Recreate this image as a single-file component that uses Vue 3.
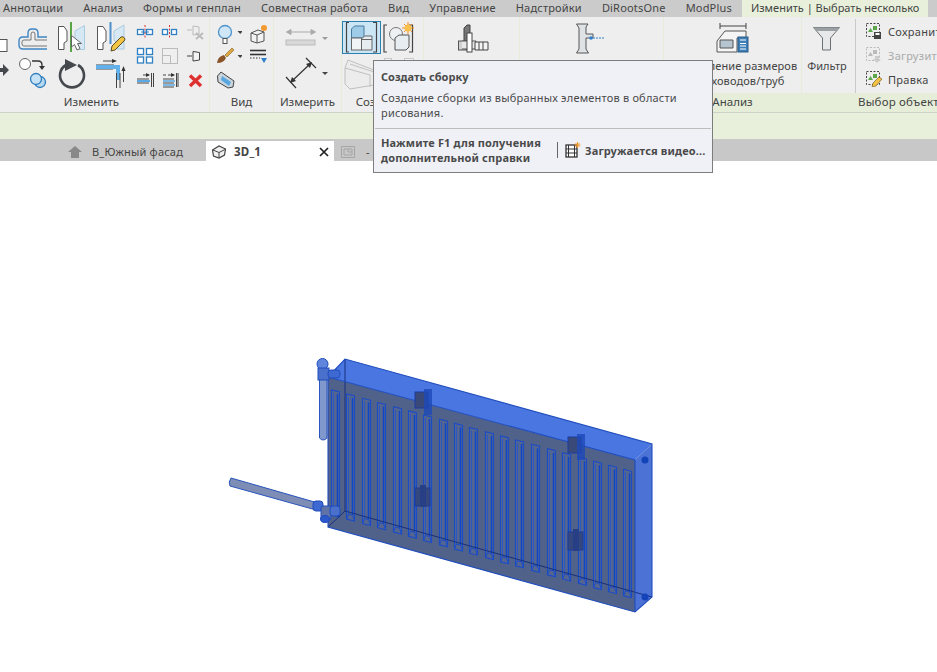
<script setup>
const menus = ['Аннотации', 'Анализ', 'Формы и генплан', 'Совместная работа', 'Вид', 'Управление', 'Надстройки', 'DiRootsOne', 'ModPlus']
const sx = [335, 350, 366, 381, 397, 412, 427, 443, 458, 473, 489, 504, 519, 535, 551, 566, 582, 597, 612, 627]
const slots = sx.map((x) => {
  const top = 377 + (x - 328) * 0.272 + 11
  const bot = 527 + (x - 328) * 0.277 - 14
  const l = x - 3.5, r = x + 4.5
  return {
    outer: `${l},${top} ${r},${top + 2} ${r},${bot + 2} ${l},${bot}`,
    foot: `M${l + 2} ${bot - 5} L${l} ${bot} M${r - 2} ${bot - 4} L${r} ${bot + 2} M${l + 2} ${bot - 5} L${r - 2} ${bot - 4}`,
    rx: r - 2,
    t: top + 4,
    b: bot - 4
  }
})
</script>

<template>
  <div class="app">
    <nav class="menu">
      <span v-for="m in menus" :key="m" class="menu-item">{{ m }}</span>
      <span class="menu-active">Изменить | Выбрать несколько</span>
    </nav>

    <section class="ribbon">
      <div class="group g-modify">
        <div class="body">
          <div class="big">
            <svg width="12" height="36" viewBox="0 19 12 36"><rect x="-3" y="39.500" width="10" height="12" fill="#fff" stroke="#555"/></svg>
            <svg width="40" height="36" viewBox="12 19 40 36">
              <path d="M47 37H38V33Q38 29 34 29H32Q28 29 28 33V37H23Q19 37 19 41V45Q19 49 23 49H47" fill="none" stroke="#3f86c4" stroke-width="1.400"/>
              <path d="M47 40H35V34Q35 32 33 32 31 32 31 34V40H24Q22 40 22 42V44Q22 46 24 46H47" fill="none" stroke="#777"/>
            </svg>
            <svg width="40" height="36" viewBox="52 19 40 36">
              <path d="M58.500 26.500H64L67 31V41L64 43V49.500H58.500Z" fill="#fff" stroke="#555"/>
              <path d="M84.500 25.500V49.500H78V43L75 40V31Z" fill="#d6e8f3" stroke="#a9cbe0"/>
              <path d="M71 22V52" stroke="#58a548" stroke-width="2"/>
              <path d="M71.500 35.500V47L74.500 44.500 77 50 80 48.500 77.500 43.500H81.500Z" fill="#fff" stroke="#666" stroke-width="1"/>
            </svg>
            <svg width="40" height="36" viewBox="92 19 40 36">
              <path d="M97.500 26.500H103L106 31V41L103 43V49.500H97.500Z" fill="#fff" stroke="#555"/>
              <path d="M124 25V49H117V43L114 40V31Z" fill="#d6e8f3" stroke="#a9cbe0"/>
              <path d="M110.500 22V44" stroke="#4b8fcb" stroke-width="2"/>
              <path d="M111 51L112 46 121 37Q123 36 124.500 38 125.500 40 124 41L115 50Z" fill="#f3c544" stroke="#5b4a22"/>
            </svg>
            <svg width="12" height="37" viewBox="0 55 12 37"><path d="M0 68H3V64L9 70 3 76V72H0Z" fill="#45484c"/></svg>
            <svg width="40" height="37" viewBox="12 55 40 37">
              <circle cx="25" cy="64" r="5.500" fill="#fff" stroke="#666"/>
              <path d="M32 61H38Q42 61 42 65V68" fill="none" stroke="#333" stroke-width="1.300"/>
              <path d="M39 66H45L42 70Z" fill="#333"/>
              <circle cx="40" cy="82" r="5.500" fill="#b5d8ef" stroke="#2f7ebf" stroke-width="1.300"/>
              <circle cx="36" cy="79" r="5.500" fill="#c7e2f4" stroke="#2f7ebf" stroke-width="1.300"/>
            </svg>
            <svg width="40" height="37" viewBox="52 55 40 37">
              <path d="M66 65A12 12 0 1 0 78 65" fill="none" stroke="#45494e" stroke-width="2.600"/>
              <path d="M65 59L77 65 65 71Z" fill="#45494e"/>
            </svg>
            <svg width="40" height="37" viewBox="92 55 40 37">
              <path d="M103 61H115M96 65H114M96 69H113" stroke="#444" fill="none"/>
              <path d="M112 59L117 61 112 63Z" fill="#333"/>
              <path d="M96 67H118V80" fill="none" stroke="#62b0ea" stroke-width="4"/>
              <path d="M116.500 73V88M120 73V88M123.500 70V82" stroke="#444" fill="none"/>
              <path d="M121.500 71L123.500 66 125.500 71Z" fill="#333"/>
            </svg>
          </div>
          <div class="small">
            <svg width="25" height="24" viewBox="132 20 25 24">
              <rect x="137.500" y="29.500" width="6" height="5" fill="#fff" stroke="#2f80c4" stroke-width="1.300"/>
              <rect x="146.500" y="29.500" width="6" height="5" fill="#fff" stroke="#2f80c4" stroke-width="1.300"/>
              <path d="M145 25V39" stroke="#d33" stroke-dasharray="2 1.500"/>
              <path d="M141 32H149" stroke="#2f80c4"/>
            </svg>
            <svg width="25" height="24" viewBox="157 20 25 24">
              <rect x="162.500" y="29.500" width="5" height="5" fill="#fff" stroke="#2f80c4" stroke-width="1.300"/>
              <rect x="171.500" y="29.500" width="5" height="5" fill="#fff" stroke="#2f80c4" stroke-width="1.300"/>
              <path d="M169.500 25V39" stroke="#d33" stroke-dasharray="2 1.500"/>
            </svg>
            <svg width="26" height="24" viewBox="182 20 26 24">
              <path d="M187 30H192M193 26L199 27V34L193 35Z" fill="#eee" stroke="#bbb"/>
              <path d="M196 33L203 39M203 33L196 39" stroke="#bbb" stroke-width="2"/>
            </svg>
            <svg width="25" height="24" viewBox="132 44 25 24">
              <g fill="#fff" stroke="#2f80c4" stroke-width="1.300"><rect x="137.500" y="48.500" width="6" height="6"/><rect x="146.500" y="48.500" width="6" height="6"/><rect x="137.500" y="57" width="6" height="6"/><rect x="146.500" y="57" width="6" height="6"/></g>
            </svg>
            <svg width="25" height="24" viewBox="157 44 25 24">
              <rect x="162.500" y="48.500" width="15" height="15" fill="#efefef" stroke="#bbb"/>
              <path d="M162.500 55.500H170.500V63.500" fill="none" stroke="#bbb"/>
            </svg>
            <svg width="26" height="24" viewBox="182 44 26 24">
              <path d="M187 56H192M193 51.500L199.500 52.500V60L193 61Z" fill="#f4f4f4" stroke="#444"/>
            </svg>
            <svg width="25" height="24" viewBox="132 68 25 24">
              <path d="M143 75H149M137 79H149M137 83H149" stroke="#444"/>
              <path d="M146 73L150 75 146 77Z" fill="#333"/>
              <path d="M137 81H150" stroke="#5aa8e4" stroke-width="2"/>
              <path d="M151.500 73V87M153.500 73V87" stroke="#444"/>
            </svg>
            <svg width="25" height="24" viewBox="157 68 25 24">
              <path d="M168 75H174M163 79H174M163 83H174M163 87H174M163 75H166" stroke="#444"/>
              <path d="M171 73L175 75 171 77Z" fill="#333"/>
              <path d="M163 81H175M163 85H175" stroke="#5aa8e4" stroke-width="1.400"/>
              <path d="M176.500 73V87M178 73V87" stroke="#444"/>
            </svg>
            <svg width="26" height="24" viewBox="182 68 26 24">
              <path d="M190 75.500L201 86M201 75.500L190 86" stroke="#df3030" stroke-width="3.400"/>
            </svg>
          </div>
        </div>
        <div class="label label-modify">Изменить</div>
      </div>

      <div class="group g-view">
        <div class="body view-grid">
          <svg width="30" height="24" viewBox="212 22 30 24">
            <circle cx="225" cy="32" r="6.500" fill="#cfe6f6" stroke="#4d92cb" stroke-width="1.300"/>
            <rect x="223" y="38.500" width="4" height="5" fill="#fff" stroke="#555"/>
            <path d="M237.500 31H243L240.200 34Z" fill="#444"/>
          </svg>
          <svg width="30" height="24" viewBox="244 22 30 24">
            <path d="M253 33L260 30 266 32V41L259 43 253 41Z" fill="#f2f2f2" stroke="#555"/>
            <path d="M259 35V43M253 33L259 35 266 32" fill="none" stroke="#555"/>
            <circle cx="266" cy="28" r="3" fill="#f29a2e"/>
          </svg>
          <svg width="30" height="24" viewBox="212 46 30 24">
            <path d="M217 63Q218 56 224 55L226 58Q224 63 217 63Z" fill="#8a5428"/>
            <path d="M225 55L232 48 234 50 227 57Z" fill="#e0a93f" stroke="#7a5a22" stroke-width=".6"/>
            <path d="M237.500 55H243L240.200 58Z" fill="#444"/>
          </svg>
          <svg width="30" height="24" viewBox="244 46 30 24">
            <path d="M252 50.500H268" stroke="#333" stroke-width="1.600"/>
            <path d="M252 54.500H268" stroke="#333" stroke-width="1.600"/>
            <path d="M252 58H262" stroke="#333" stroke-dasharray="1.500 1.500"/>
            <path d="M263 58H269L266 63Z" fill="#2f7ecb"/>
          </svg>
          <svg width="30" height="24" viewBox="212 70 30 24">
            <path d="M217.500 76L221 72 234 81 233 87 228 88 218 82Z" fill="#c9d4dc" stroke="#444"/>
            <path d="M222 76L231 82 229 86 221 80Z" fill="#57a6e0"/>
          </svg>
        </div>
        <div class="label">Вид</div>
      </div>

      <div class="group g-measure">
        <div class="body measure-col">
          <svg width="66" height="35" viewBox="275 21 66 35">
            <path d="M288 32H314M291 29.500L286.500 32 291 34.500ZM311 29.500L315.500 32 311 34.500Z" fill="#aaa" stroke="#aaa"/>
            <rect x="286" y="40" width="29" height="5" fill="#d8d8d8" stroke="#bbb"/>
            <path d="M322 37H328L325 40Z" fill="#999"/>
          </svg>
          <svg width="66" height="37" viewBox="275 56 66 37">
            <path d="M291 82L311 63" stroke="#333" stroke-width="1.200"/>
            <path d="M286 77L296 88M306 58L316 68" stroke="#333" stroke-width="1.200"/>
            <path d="M290 83L292 77 296 81ZM312 62L310 68 306 64Z" fill="#333"/>
            <path d="M322 72H328L325 75Z" fill="#444"/>
          </svg>
        </div>
        <div class="label">Измерить</div>
      </div>

      <div class="group g-create">
        <div class="body create-grid">
          <button class="selected">
            <svg width="37" height="31" viewBox="344 22 37 31">
              <path d="M350 22.500H347.500V52H350M374 22.500H377.500V52H374" fill="none" stroke="#444" stroke-width="1.200"/>
              <path d="M352.500 29L355.500 26H365V38H352.500Z" fill="#9dcbe8" stroke="#4a7a9c"/>
              <rect x="352.500" y="38" width="10" height="12" fill="#f1f4f6" stroke="#666"/>
              <path d="M362.500 39L365.500 36H373V50H362.500Z" fill="#e6ecf0" stroke="#666"/>
              <path d="M362.500 39.500H373" stroke="#666"/>
            </svg>
          </button>
          <svg width="38" height="33" viewBox="382 21 38 33">
            <path d="M388 25H385V52H388M410 25H413.500V52H410" fill="none" stroke="#444" stroke-width="1.200"/>
            <circle cx="397" cy="34" r="6.500" fill="#eef1f3" stroke="#777"/>
            <path d="M396 38L400 35H410V47L407 50H396Z" fill="#e7edf1" stroke="#555"/>
            <path d="M409 22V34M403 28H415M405 24L413 32M413 24L405 32" stroke="#f08a20"/>
            <circle cx="409" cy="28" r="3.500" fill="#f9c04a"/>
          </svg>
          <svg width="38" height="36" viewBox="344 56 38 36">
            <path d="M350 60L376 70V85L352 89 347 84V68Z" fill="#ececec" stroke="#c0c0c0"/>
            <path d="M347 68L372 75V87M352 64L376 72" fill="none" stroke="#c0c0c0"/>
          </svg>
          <svg width="38" height="36" viewBox="382 56 38 36">
            <rect x="385.500" y="58.500" width="7" height="6" fill="#f2f2f2" stroke="#c8c8c8"/>
            <rect x="405.500" y="58.500" width="9" height="6" fill="#f2f2f2" stroke="#c8c8c8"/>
          </svg>
        </div>
        <div class="label">Создание</div>
      </div>

      <div class="group g-a">
        <div class="body center">
          <svg width="34" height="34" viewBox="458 21 34 34">
            <path d="M464 28L467 25H470V41H464Z" fill="#777" stroke="#444"/>
            <rect x="458.500" y="41" width="8" height="9" fill="#d0d0d0" stroke="#555"/>
            <path d="M462 41H476V49H462" fill="#e8e8e8" stroke="#555"/>
            <rect x="467" y="33" width="5" height="19" fill="#fff" stroke="#444"/>
            <path d="M475 42H488V50H475ZM479 42V50M483 42V50" fill="#f4f4f4" stroke="#444"/>
          </svg>
        </div>
        <div class="label"></div>
      </div>

      <div class="group g-b">
        <div class="body center">
          <svg width="34" height="34" viewBox="574 21 34 34">
            <path d="M575.500 24H587L585 27V34H592V38H585V49L587.500 53H575.500L578 49V28Z" fill="#dfe2e5" stroke="#555"/>
            <circle cx="590" cy="38" r="1.800" fill="#2f80cf"/>
            <path d="M592 38H604" stroke="#2f80cf" stroke-dasharray="2 1"/>
          </svg>
        </div>
        <div class="label"></div>
      </div>

      <div class="group g-analysis">
        <div class="body sizing">
          <svg width="36" height="32" viewBox="714 22 36 32">
            <path d="M719 26H745M719 23V29M745 23V29" fill="none" stroke="#444"/>
            <path d="M716 41L724 31H745V38H736V52H716Z" fill="#f5f5f5" stroke="#555"/>
            <path d="M719 40H732V48H719Z" fill="#b5c4cf" stroke="#555"/>
            <rect x="737" y="37" width="10" height="15" fill="#3d7fb8" stroke="#2b5d88"/>
            <path d="M739 40H745M739 43.500H745M739 46H745M739 49H745" stroke="#fff"/>
          </svg>
          <span class="size-text">Определение размеров<br>воздуховодов/труб</span>
        </div>
        <div class="label green">Анализ</div>
      </div>

      <div class="group g-select">
        <div class="body select-body">
          <div class="filter">
            <svg width="30" height="28" viewBox="813 26 30 28">
              <path d="M814.500 28.500H840.500L831.500 39V51H823.500V39Z" fill="#e6e8ea" stroke="#6d7072"/>
              <path d="M814.500 28.500H840.500L838 32H817Z" fill="#9aa0a4"/>
            </svg>
            <span>Фильтр</span>
          </div>
          <div class="sel-list">
            <div class="sel-row">
              <svg width="16" height="16" viewBox="0 0 16 16"><rect x=".5" y=".5" width="13" height="13" fill="none" stroke="#444" stroke-dasharray="2 1.500"/><path d="M2 9L4.500 5 7 9Z" fill="#5aa648"/><rect x="7" y="3" width="4" height="4" fill="#5aa648"/><rect x="8" y="9" width="7" height="7" fill="#444"/><rect x="9.500" y="10" width="4" height="2" fill="#fff"/></svg>
              <span>Сохранить</span>
            </div>
            <div class="sel-row off">
              <svg width="16" height="16" viewBox="0 0 16 16"><rect x=".5" y=".5" width="13" height="13" fill="none" stroke="#bbb" stroke-dasharray="2 1.500"/><path d="M2 9L4.500 5 7 9Z" fill="#bbb"/><rect x="7" y="3" width="4" height="4" fill="#bbb"/><path d="M9 9H13V12H15L11 16 7 12H9Z" fill="#ccc"/></svg>
              <span>Загрузить</span>
            </div>
            <div class="sel-row">
              <svg width="16" height="16" viewBox="0 0 16 16"><rect x=".5" y=".5" width="13" height="13" fill="none" stroke="#444" stroke-dasharray="2 1.500"/><path d="M2 9L4.500 5 7 9Z" fill="#5aa648"/><rect x="7" y="3" width="4" height="4" fill="#5aa648"/><path d="M6 16L7 12 13 6 16 8 10 15Z" fill="#f1c243" stroke="#6a5420" stroke-width=".6"/></svg>
              <span>Правка</span>
            </div>
          </div>
        </div>
        <div class="label green left">Выбор объектов</div>
      </div>
    </section>

    <div class="options"></div>

    <div class="tabs">
      <div class="tab">
        <svg width="16" height="14" viewBox="0 0 16 14"><path d="M8 1L15 7H12V13H4V7H1Z" fill="#888"/></svg>
        <span>В_Южный фасад</span>
      </div>
      <div class="tab active">
        <svg width="16" height="14" viewBox="0 0 16 14"><path d="M1.500 5L8 1 14.500 4 13.500 10 8 13 2.500 11Z" fill="#f0f0f0" stroke="#444" stroke-width="1.200"/><path d="M2 5L8 7.500 14 4.500M8 7.500V13" fill="none" stroke="#444"/></svg>
        <span class="tab-name">3D_1</span>
        <svg class="close" width="10" height="10" viewBox="0 0 10 10"><path d="M1 1L9 9M9 1L1 9" stroke="#222" stroke-width="1.700"/></svg>
      </div>
      <div class="tab plan">
        <svg width="16" height="14" viewBox="0 0 16 14"><path d="M1.500 1.500H14.500V12.500H1.500ZM4 4H12V10H4ZM8 4V7H12" fill="none" stroke="#a5a5a5"/></svg>
        <span>-</span>
      </div>
    </div>

    <div class="tooltip">
      <div class="tt-title">Создать сборку</div>
      <div class="tt-desc">Создание сборки из выбранных элементов в области<br>рисования.</div>
      <div class="tt-foot">
        <div class="tt-help">Нажмите F1 для получения<br>дополнительной справки</div>
        <div class="tt-video">
          <svg width="16" height="16" viewBox="0 0 16 16"><rect x="1" y="3" width="11" height="12" fill="#fff" stroke="#333" stroke-width="1.300"/><path d="M3.500 3V15M9.500 3V15M1 7H12M1 11H12" stroke="#333"/><path d="M12.500 0V6M9.500 3H15.500M10.500 1L14.500 5M14.500 1L10.500 5" stroke="#f09a2c"/></svg>
          <span>Загружается видео...</span>
        </div>
      </div>
    </div>

    <svg class="canvas" width="937" height="511" viewBox="0 161 937 511">
      <path d="M319.500 376H327V438Q323 442 319.500 438Z" fill="#8098cc" stroke="#2a55bd"/>
      <path d="M231 478L318 503 316 510 230 486Q228 482 231 478Z" fill="#7d8db5" stroke="#2a55bd"/>
      <polygon points="328,377 635,460 635,612 328,527" fill="#50618a"/>
      <polygon points="328,377 345,359 652,444 635,460" fill="#4a76e2"/>
      <polygon points="635,460 652,444 652,597 635,612" fill="#4c72d6"/>
      <g v-for="(s, i) in slots" :key="i" fill="none" stroke="#1a4cc8">
        <polygon :points="s.outer" fill="#54668f" stroke-width="1.100"/>
        <path :d="`M${s.rx} ${s.t}V${s.b}`" stroke="#0f46c8" stroke-width="1.500"/>
        <path :d="`M${s.rx - 4} ${s.t - 1}V${s.b - 1}`" stroke="#2c58c4" stroke-width="1"/>
        <path :d="s.foot" stroke-width="1"/>
      </g>
      <path d="M345 359V511L652 597M345 511L328 527" fill="none" stroke="#16307e"/>
      <polygon points="328,377 345,359 652,444 652,597 635,612 328,527" fill="none" stroke="#1f4dbd" stroke-width="1.100"/>
      <path d="M328 377L635 460V612" fill="none" stroke="#1f4dbd" stroke-width="1.100"/>
      <circle cx="645" cy="460" r="3.500" fill="#1243b8"/>
      <circle cx="645" cy="597" r="3.500" fill="#1243b8"/>
      <g v-for="b in [[423,402],[576,447]]" :key="b[0]">
        <rect :x="b[0] - 8" :y="b[1] - 10" width="13" height="16" fill="#3a4a78" stroke="#1b3ca0"/>
        <rect :x="b[0] + 1" :y="b[1] - 13" width="8" height="26" fill="#1d48b8" opacity=".8"/>
      </g>
      <g v-for="b in [[423,497],[576,541]]" :key="b[0]">
        <rect :x="b[0] - 8" :y="b[1] - 9" width="15" height="18" fill="#34477f" stroke="#1b3ca0"/>
        <rect :x="b[0] - 3" :y="b[1] - 12" width="6" height="22" fill="#263f85"/>
      </g>
      <ellipse cx="322.500" cy="364" rx="5.500" ry="5.500" fill="#5f86dc" stroke="#1f4dbd"/>
      <rect x="318" y="368" width="11" height="12" fill="#4a70cc" stroke="#1f4dbd"/>
      <rect x="328" y="370" width="12" height="8" rx="3" fill="#3e69d2" stroke="#1f4dbd"/>
      <rect x="313" y="501" width="10" height="10" rx="3" fill="#3e69d2" stroke="#1f4dbd"/>
      <rect x="321" y="506" width="10" height="14" rx="2" fill="#5f73a6" stroke="#1f4dbd"/>
      <ellipse cx="325" cy="519" rx="4.500" ry="3.500" fill="#2b58ca" stroke="#1f4dbd"/>
      <rect x="330" y="506" width="10" height="10" rx="3" fill="#4a70cc" stroke="#1f4dbd"/>
    </svg>
  </div>
</template>

<style>
html, body { margin: 0; background: #fff; overflow: hidden; }
</style>

<style scoped>
.app {
  position: relative;
  width: 937px;
  height: 672px;
  overflow: hidden;
  font-family: "Noto Sans", "Open Sans", sans-serif;
  font-size: 11px;
  color: #444;
  background: #fff;
}
svg { display: block; flex: none; }
.menu {
  display: flex;
  height: 17px;
  background: #cbcbcb;
  padding-left: 3px;
  line-height: 15px;
}
.menu-item { margin-right: 20px; letter-spacing: .19px; }
.menu-active {
  margin-left: -10px;
  padding: 0 9px;
  background: #e8f0dc;
  white-space: nowrap;
}
.ribbon {
  display: flex;
  height: 95px;
  background: #eeeeee;
  border-bottom: 1px solid #cfd2c8;
  overflow: hidden;
}
.group {
  flex: none;
  display: flex;
  flex-direction: column;
  box-sizing: border-box;
  border-right: 1px solid #e5ecd9;
}
.body { height: 76px; flex: none; overflow: hidden; }
.label {
  height: 19px;
  line-height: 18px;
  text-align: center;
  white-space: nowrap;
  font-size: 11.500px;
}
.label-modify { padding-right: 26px; }
.label.green { background: #e6eed9; }
.label.left { text-align: left; padding-left: 56px; letter-spacing: .2px; }
.g-modify { width: 210px; }
.g-modify .body { display: flex; padding-top: 2px; box-sizing: border-box; }
.big { display: grid; grid-template-columns: 12px 40px 40px 40px; grid-template-rows: 36px 37px; flex: none; }
.small { display: grid; grid-template-columns: 25px 25px 26px; grid-template-rows: 24px 24px 24px; padding-top: 1px; flex: none; }
.g-view { width: 64px; }
.view-grid { display: grid; grid-template-columns: 32px 30px; grid-template-rows: 24px 24px 24px; padding-top: 5px; box-sizing: border-box; }
.view-grid svg:nth-child(odd) { margin-left: 2px; }
.g-measure { width: 68px; }
.measure-col { padding-top: 4px; box-sizing: border-box; }
.measure-col svg { margin-left: 1px; }
.g-create { width: 82px; }
.create-grid { display: grid; grid-template-columns: 39px 38px; grid-template-rows: 35px 38px; padding-top: 4px; box-sizing: border-box; }
.selected {
  width: 39px;
  height: 33px;
  padding: 0;
  border: 1px solid #2d7fb0;
  background: #cde6f5;
  box-sizing: border-box;
}
.center { display: flex; justify-content: center; padding-top: 4px; box-sizing: border-box; }
.g-a { width: 96px; }
.g-a .center { padding-left: 6px; }
.g-b { width: 144px; }
.g-analysis { width: 138px; }
.sizing { display: flex; flex-direction: column; align-items: center; padding-top: 5px; box-sizing: border-box; }
.size-text { text-align: center; line-height: 15px; white-space: nowrap; margin-top: 4px; letter-spacing: .1px; }
.g-select { width: 300px; }
.select-body { display: flex; padding-top: 2px; box-sizing: border-box; height: 76px; }
.filter { width: 53px; padding: 6px 3px 0 0; display: flex; flex-direction: column; align-items: center; flex: none; box-sizing: border-box; }
.filter span { margin-top: 5px; }
.sel-list { border-left: 1px solid #c9c9c9; padding-left: 10px; }
.sel-row { display: flex; align-items: center; gap: 6px; height: 24px; white-space: nowrap; letter-spacing: .3px; }
.sel-row.off { color: #aaa; }
.options { height: 26px; background: #e8f0dc; }
.tabs {
  display: flex;
  height: 22px;
  background: #c8c8c8;
  padding-left: 67px;
  align-items: flex-end;
}
.tab {
  display: flex;
  align-items: center;
  gap: 9px;
  height: 20px;
  width: 139px;
  box-sizing: border-box;
  flex: none;
  letter-spacing: .2px;
  padding-top: 1px;
}
.tab.active {
  background: #fff;
  width: 128px;
  padding-left: 5px;
  gap: 7px;
}
.tab-name { font-weight: 700; flex: 1; font-size: 11.500px; }
.close { margin-right: 5px; }
.tab.plan { padding-left: 6px; gap: 10px; }
.tooltip {
  position: absolute;
  left: 373px;
  top: 60px;
  width: 340px;
  height: 113px;
  box-sizing: border-box;
  border: 1px solid #7d7d7d;
  background: #f0f1f7;
  padding: 8px 7px 0;
  font-size: 11px;
  color: #4a4a4a;
}
.tt-title { font-weight: 700; line-height: 15px; }
.tt-desc { margin-top: 6px; line-height: 15px; letter-spacing: .2px; }
.tt-foot {
  display: flex;
  align-items: center;
  margin: 8px -6px 0;
  padding: 6px 6px 0;
  border-top: 1px solid #bdbdbd;
  font-weight: 700;
  letter-spacing: .15px;
}
.tt-help { line-height: 15px; width: 176px; flex: none; white-space: nowrap; }
.tt-video {
  display: flex;
  align-items: center;
  gap: 4px;
  border-left: 1px solid #666;
  padding-left: 7px;
  height: 16px;
  white-space: nowrap;
}
.canvas { background: #fff; }
</style>
